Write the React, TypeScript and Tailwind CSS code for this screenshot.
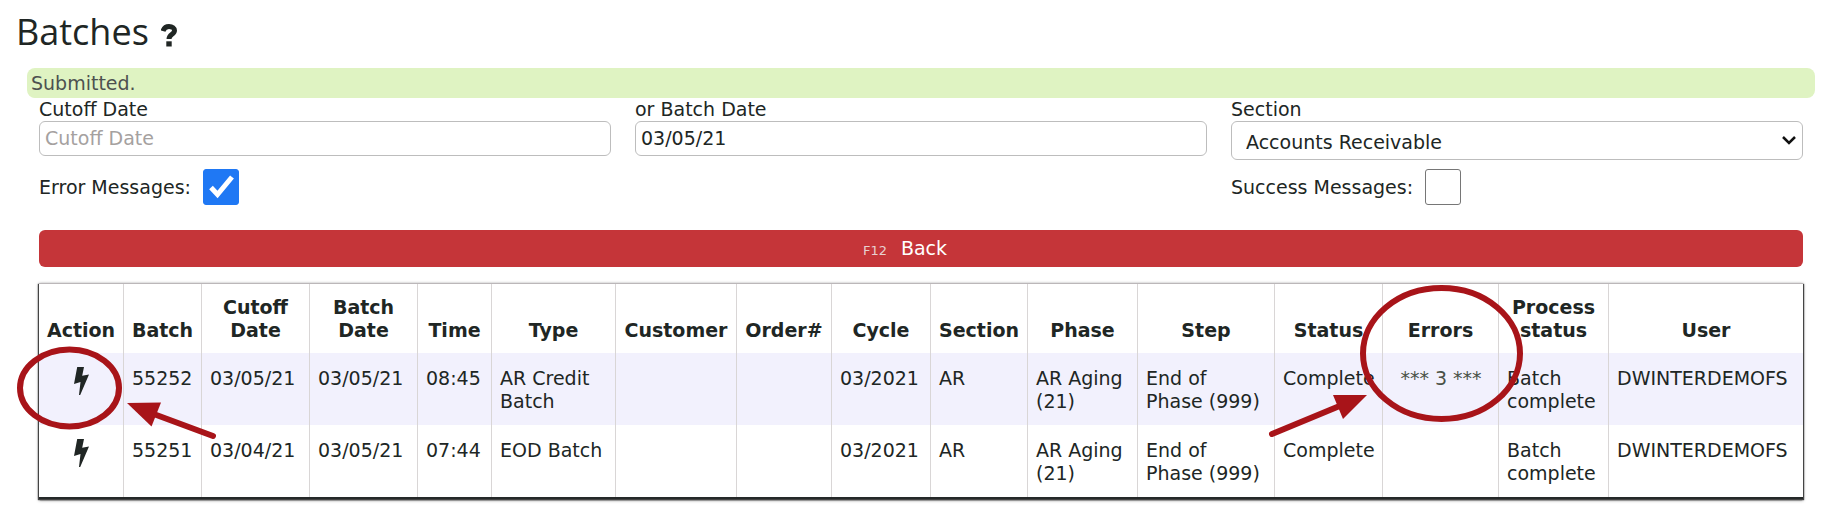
import { useState } from 'react';

const columns = [
  { label: 'Action', width: 'w-[85px]' },
  { label: 'Batch', width: 'w-[78px]' },
  { label: 'Cutoff Date', width: 'w-[108px]' },
  { label: 'Batch Date', width: 'w-[108px]' },
  { label: 'Time', width: 'w-[74px]' },
  { label: 'Type', width: 'w-[124px]' },
  { label: 'Customer', width: 'w-[121px]' },
  { label: 'Order#', width: 'w-[95px]' },
  { label: 'Cycle', width: 'w-[99px]' },
  { label: 'Section', width: 'w-[97px]' },
  { label: 'Phase', width: 'w-[110px]' },
  { label: 'Step', width: 'w-[137px]' },
  { label: 'Status', width: 'w-[108px]' },
  { label: 'Errors', width: 'w-[116px]' },
  { label: 'Process status', width: 'w-[110px]' },
  { label: 'User', width: 'w-[194px]' },
];

const batches = [
  {
    batch: '55252',
    cutoff: '03/05/21',
    date: '03/05/21',
    time: '08:45',
    type: 'AR Credit Batch',
    errors: '*** 3 ***',
  },
  {
    batch: '55251',
    cutoff: '03/04/21',
    date: '03/05/21',
    time: '07:44',
    type: 'EOD Batch',
    errors: '',
  },
];

const cell = 'border-r border-[#d9d6d6] pr-[7px] pl-2 pt-[14px] pb-3 align-top last:border-r-0';
const field = 'block w-full rounded-md border border-[#bdbdbd] bg-white outline-none';

function Bolt() {
  return (
    <svg viewBox="0 0 15 28" className="h-7 w-[15px]" fill="currentColor" aria-hidden="true">
      <path d="M3.200 0h6.800L8.200 8.800 15 7.600 6.200 28H5L6.500 15 0 17Z" />
    </svg>
  );
}

// Red circle and arrow around the action icon
function ActionCallout() {
  return (
    <svg width="210" height="120" viewBox="10 340 210 120" className="pointer-events-none absolute -top-[14px] -left-[29px] max-w-none" aria-hidden="true">
      <ellipse cx="69.500" cy="389" rx="49.500" ry="38.500" fill="none" stroke="#a81419" strokeWidth="6" />
      <path d="M213 437 151 414" stroke="#a81419" strokeWidth="6" strokeLinecap="round" />
      <path d="M127 404 161 403.500 151.500 427.500Z" fill="#a81419" />
    </svg>
  );
}

// Red circle and arrow around the error count
function ErrorsCallout() {
  return (
    <svg width="270" height="160" viewBox="1260 280 270 160" className="pointer-events-none absolute -top-[74px] -left-[123px] max-w-none" aria-hidden="true">
      <ellipse cx="1441.500" cy="354.500" rx="78.500" ry="65.500" fill="none" stroke="#a81419" strokeWidth="6" />
      <path d="M1272 435 1342 406" stroke="#a81419" strokeWidth="6" strokeLinecap="round" />
      <path d="M1367 396 1333 396 1343 420Z" fill="#a81419" />
    </svg>
  );
}

function Checkbox({ label, checked, onChange }: { label: string; checked: boolean; onChange: (v: boolean) => void }) {
  return (
    <label className="flex items-center gap-3">
      {label}
      <span className="relative flex">
        <input
          type="checkbox"
          checked={checked}
          onChange={(e) => onChange(e.target.checked)}
          className="peer size-9 appearance-none rounded-[3px] border border-[#767676] checked:border-[#1f78f4] checked:bg-[#1f78f4]"
        />
        <svg viewBox="0 0 36 36" className="pointer-events-none absolute inset-0 hidden size-9 peer-checked:block" fill="none" stroke="#fff" strokeWidth="5" aria-hidden="true">
          <path d="M8 18.500 14.500 25.500 29 8" />
        </svg>
      </span>
    </label>
  );
}

export default function Batches() {
  const [cutoffDate, setCutoffDate] = useState('');
  const [batchDate, setBatchDate] = useState('03/05/21');
  const [showErrors, setShowErrors] = useState(true);
  const [showSuccess, setShowSuccess] = useState(false);

  return (
    <div className="min-h-screen bg-white pt-2 pb-4 font-['DejaVu_Sans',sans-serif] text-[19px] leading-[23px] text-[#202624]">
      <header className="flex h-[60px] items-start gap-3 px-4">
        <h1 className="font-['Open_Sans',sans-serif] text-[36px] leading-[48px]">Batches</h1>
        <button type="button" aria-label="Help" className="pt-4">
          <svg viewBox="0 0 16 23" className="h-[23px] w-4" aria-hidden="true">
            <path d="M2 7C3 3.800 5 2.500 8 2.500c3.500 0 5.500 1.700 5.500 4C13.500 10.500 8 10 8 15" fill="none" stroke="currentColor" strokeWidth="5" />
            <path d="M5.300 17.300h5.400V22.500h-5.400Z" fill="currentColor" />
          </svg>
        </button>
      </header>

      <div className="mr-5 ml-[27px] rounded-lg bg-[#dff3c2] px-1 pt-1 pb-[3px] text-[#4d5150]" role="status">
        Submitted.
      </div>

      <main className="mr-8 ml-[39px]">
        <form onSubmit={(e) => e.preventDefault()}>
          <div className="grid grid-cols-3 gap-x-6">
            <div>
              <label htmlFor="cutoff" className="block">Cutoff Date</label>
              <input
                id="cutoff"
                type="text"
                placeholder="Cutoff Date"
                value={cutoffDate}
                onChange={(e) => setCutoffDate(e.target.value)}
                className={`${field} h-[35px] px-[5px] pb-[2px] placeholder:text-[#a5a19f]`}
              />
            </div>
            <div>
              <label htmlFor="batch-date" className="block">or Batch Date</label>
              <input
                id="batch-date"
                type="text"
                value={batchDate}
                onChange={(e) => setBatchDate(e.target.value)}
                className={`${field} h-[35px] px-[5px] pb-[2px]`}
              />
            </div>
            <div>
              <label htmlFor="section" className="block">Section</label>
              <div className="relative">
                <select id="section" className={`${field} h-[39px] appearance-none pt-1 pl-[14px]`}>
                  <option>Accounts Receivable</option>
                </select>
                <svg viewBox="0 0 14 9" className="pointer-events-none absolute top-[15px] right-[7px] h-[9px] w-[14px]" fill="none" stroke="#111" strokeWidth="2.500" aria-hidden="true">
                  <path d="M1 1 7 7 13 1" />
                </svg>
              </div>
            </div>
          </div>

          <div className="grid grid-cols-3 gap-x-6 pt-[9px]">
            <Checkbox label="Error Messages:" checked={showErrors} onChange={setShowErrors} />
            <div className="col-start-3">
              <Checkbox label="Success Messages:" checked={showSuccess} onChange={setShowSuccess} />
            </div>
          </div>

          <button type="button" className="mt-[25px] flex h-[37px] w-full items-center justify-center gap-[14px] rounded-md bg-[#c53539] pr-8 text-white">
            <span className="pt-1 text-[13px] text-[#e8d0d0]">F12</span>
            <span>Back</span>
          </button>
        </form>

        <table className="mt-4 w-full table-fixed border-separate border-spacing-0 border-t border-b-2 border-t-[#bbb7b9] border-b-[#252929] shadow-[-1px_1px_1px_#444,1px_1px_1px_#444,0_1px_3px_#555]">
          <thead>
            <tr>
              {columns.map((col) => (
                <th key={col.label} scope="col" className={`${col.width} border-r border-[#d9d6d6] px-1 pt-3 pb-[11px] align-bottom font-bold last:border-r-0`}>
                  {col.label}
                </th>
              ))}
            </tr>
          </thead>
          <tbody>
            {batches.map((row, i) => (
              <tr key={row.batch} className="odd:bg-[#f2f1fd]">
                <td className={`${cell} relative`}>
                  <button type="button" aria-label={`Run batch ${row.batch}`} className="block w-full">
                    <span className="flex justify-center"><Bolt /></span>
                  </button>
                  {i === 0 && <ActionCallout />}
                </td>
                <td className={cell}>{row.batch}</td>
                <td className={cell}>{row.cutoff}</td>
                <td className={cell}>{row.date}</td>
                <td className={cell}>{row.time}</td>
                <td className={cell}>{row.type}</td>
                <td className={cell}></td>
                <td className={cell}></td>
                <td className={cell}>03/2021</td>
                <td className={cell}>AR</td>
                <td className={cell}>AR Aging (21)</td>
                <td className={cell}>End of Phase (999)</td>
                <td className={cell}>Complete</td>
                <td className={`${cell} relative`}>
                  {row.errors && <a href="#errors" className="block text-center text-[#4a5146]">{row.errors}</a>}
                  {i === 0 && <ErrorsCallout />}
                </td>
                <td className={cell}>Batch complete</td>
                <td className={cell}>DWINTERDEMOFS</td>
              </tr>
            ))}
          </tbody>
        </table>
      </main>
    </div>
  );
}
